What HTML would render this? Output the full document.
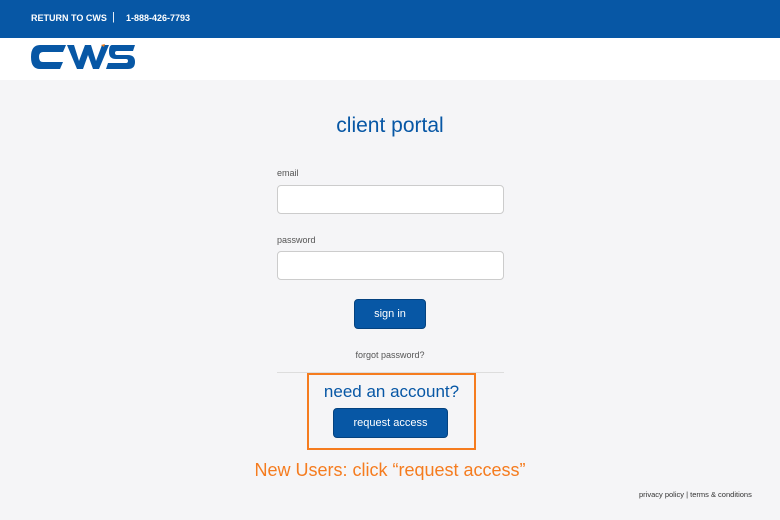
<!DOCTYPE html>
<html><head><style>
*{margin:0;padding:0;box-sizing:border-box}
body{width:780px;height:520px;background:#f5f5f7;font-family:"Liberation Sans",sans-serif;position:relative;overflow:hidden}
.top{position:absolute;left:0;top:0;width:780px;height:38px;background:#0757a5;color:#fff;font-size:9px;font-weight:bold}
.top span{position:absolute;top:13px}
.hdr{position:absolute;left:0;top:38px;width:780px;height:42px;background:#fff}
.a{position:absolute}
.lbl{font-size:9px;color:#555}
.in{position:absolute;left:277px;width:227px;height:29px;background:#fff;border:1px solid #ccc;border-radius:4px}
.btn{position:absolute;background:#0757a5;color:#fff;border:1px solid #04427f;border-radius:4px;font-size:11px;text-align:center}
</style></head><body>
<div class="top"><span style="left:31px">RETURN TO CWS</span><span style="left:112px;top:11px;font-weight:normal;font-size:11px">|</span><span style="left:126px">1-888-426-7793</span></div>
<div class="hdr">
<svg class="a" style="left:30px;top:6px" width="106" height="26" viewBox="0 0 106 26">
<g fill="#0757a5">
<path d="M10 1h26l-3 7H13q-4 0-4 5t4 5h20l-3 7H10Q1 25 1 13T10 1z"/>
<path d="M37 1h7l5 16 6-16h6l5 16 6-16h7l-10 24h-6l-5-14-5 14h-6z"/>
<path d="M82 1h23l-2 6H87q-2 0-2 2t2 2h11q7 0 7 7t-7 7H76l2-6h18q2 0 2-2t-2-2H86q-7 0-7-7t3-7z"/>
</g>
<path d="M71 1l4-1-1 3z" fill="#f07c1a"/>
</svg>
</div>
<div class="a" style="left:0;width:780px;top:114px;text-align:center;font-size:21px;color:#0757a5">client portal</div>
<div class="a lbl" style="left:277px;top:168px">email</div>
<div class="in" style="top:185px"></div>
<div class="a lbl" style="left:277px;top:235px">password</div>
<div class="in" style="top:251px"></div>
<div class="btn" style="left:354px;top:299px;width:72px;height:30px;line-height:29px">sign in</div>
<div class="a" style="left:0;width:780px;top:350px;text-align:center;font-size:9px;color:#555">forgot password?</div>
<div class="a" style="left:277px;top:372px;width:227px;height:1px;background:#ddd"></div>
<div class="a" style="left:307px;top:373px;width:169px;height:77px;border:2px solid #f57c1f"></div>
<div class="a" style="left:307px;width:169px;top:382px;text-align:center;font-size:17px;color:#0757a5">need an account?</div>
<div class="btn" style="left:333px;top:408px;width:115px;height:30px;line-height:29px">request access</div>
<div class="a" style="left:0;width:780px;top:460px;text-align:center;font-size:18px;color:#f57c1f">New Users: click “request access”</div>
<div class="a" style="left:639px;top:490px;font-size:7.5px;color:#333">privacy policy | terms &amp; conditions</div>
</body></html>
